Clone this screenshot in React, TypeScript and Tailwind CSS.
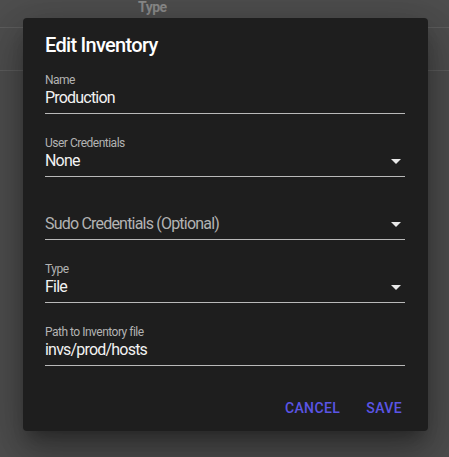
import { ReactNode } from "react";

function MenuDown() {
  return (
    <svg viewBox="0 0 24 24" className="w-6 h-6 -my-[2px] -mr-[3px] shrink-0" fill="#e8e8e8">
      <path d="M7,10L12,15L17,10H7Z" />
    </svg>
  );
}

function Field({
  label,
  value,
  placeholder,
  select,
}: {
  label?: string;
  value?: string;
  placeholder?: string;
  select?: boolean;
}) {
  return (
    <div className="border-b border-[#b9b9b9]">
      <div className="h-4 text-[12px] leading-4 tracking-[-0.5px] text-[#b3b3b3]">{label}</div>
      <div className="flex items-center h-5 mb-[5px]">
        <div
          className={`flex-1 text-[16px] leading-5 tracking-[-0.8px] ${
            value ? "text-[#f2f2f2]" : "text-[#b3b3b3]"
          }`}
        >
          {value ?? placeholder}
        </div>
        {select && <MenuDown />}
      </div>
    </div>
  );
}

function Btn({ children }: { children: ReactNode }) {
  return (
    <button className="h-9 px-2 text-[14px] font-medium uppercase tracking-[0.4px] text-[#5b55e6]">
      {children}
    </button>
  );
}

export default function App() {
  return (
    <div className="relative w-[449px] h-[457px] overflow-hidden bg-[#4e4e4e] font-['Roboto',sans-serif]">
      {/* table behind the overlay */}
      <div className="h-[31px] border-b border-[#5e5e5e] pl-[138px]">
        <div className="-mt-[3px] text-[14px] font-bold leading-5 tracking-[-0.5px] text-[#8b8b8b]">Type</div>
      </div>
      <div className="h-[43px] border-b border-[#5e5e5e]" />

      {/* dialog */}
      <div className="absolute left-[23px] top-[18px] w-[405px] h-[413px] rounded bg-[#1e1e1e] shadow-[0_11px_15px_-7px_rgba(0,0,0,0.3),0_24px_38px_3px_rgba(0,0,0,0.2),0_9px_46px_8px_rgba(0,0,0,0.18)] flex flex-col">
        <div className="pt-[11px] px-[22px] text-[20px] font-medium leading-8 tracking-[-0.7px] text-white">
          Edit Inventory
        </div>
        <div className="mt-[11px] pl-[22px] pr-[23px] flex flex-col gap-[21px]">
          <Field label="Name" value="Production" />
          <Field label="User Credentials" value="None" select />
          <Field placeholder="Sudo Credentials (Optional)" select />
          <Field label="Type" value="File" select />
          <Field label="Path to Inventory file" value="invs/prod/hosts" />
        </div>
        <div className="mt-[24px] flex justify-end gap-[10px] pr-[18px]">
          <Btn>Cancel</Btn>
          <Btn>Save</Btn>
        </div>
      </div>
    </div>
  );
}
